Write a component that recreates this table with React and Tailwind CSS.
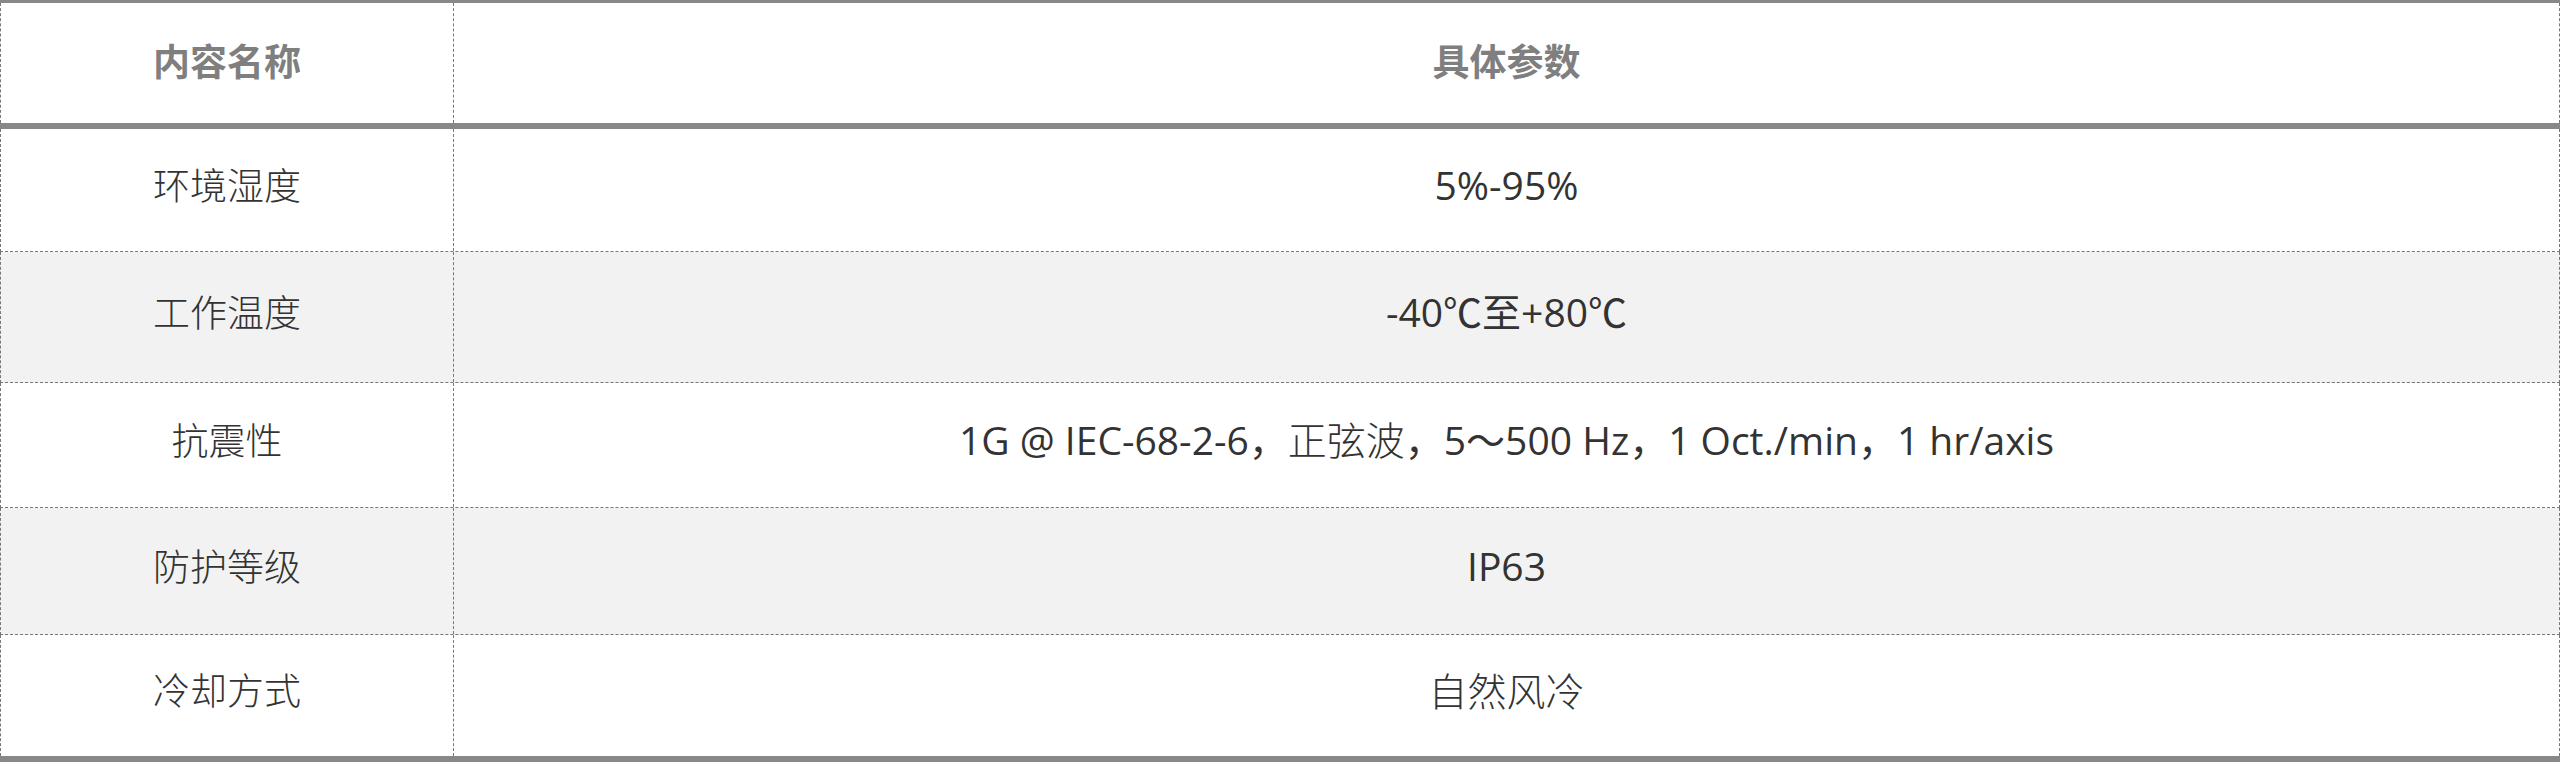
const rows = [
  { name: "环境湿度", value: "5%-95%", h: "h-[123px]" },
  { name: "工作温度", value: "-40℃至+80℃", h: "h-[131px]", alt: true },
  {
    name: "抗震性",
    value: (
      <>
        1G @ IEC-68-2-6，<span className="font-light">正弦波</span>，5～500 Hz，1 Oct./min，1 hr/axis
      </>
    ),
    h: "h-[125px]",
  },
  { name: "防护等级", value: "IP63", h: "h-[127px]", alt: true },
  {
    name: "冷却方式",
    value: <span className="font-light">自然风冷</span>,
    h: "h-[121px]",
    last: true,
  },
];

export default function App() {
  return (
    <div className="w-[2560px] h-[780px] bg-white font-['Open_Sans','Noto_Sans_CJK_SC',sans-serif]">
      {/* top rule */}
      <div className="h-[3px] bg-[#888]" />

      {/* header */}
      <div className="flex h-[120px] border-x border-dashed border-[#777] text-[37px] font-bold text-[#7f7f7f]">
        <div className="w-[453px] flex items-center justify-center pb-[3px] border-r border-dashed border-[#777]">
          内容名称
        </div>
        <div className="flex-1 flex items-center justify-center pb-[3px]">具体参数</div>
      </div>
      <div className="h-[6px] bg-[#888]" />

      {/* body */}
      {rows.map((r) => (
        <div
          key={r.name}
          className={`flex ${r.h} border-x border-dashed border-[#777] text-[#333] ${
            r.alt ? "bg-[#f2f2f2]" : "bg-white"
          } ${r.last ? "" : "border-b"}`}
        >
          <div className="w-[453px] flex items-center justify-center pb-[9px] border-r border-dashed border-[#777] text-[37px] font-light">
            {r.name}
          </div>
          <div className="flex-1 flex items-center justify-center pb-[9px] text-[39px]">
            {r.value}
          </div>
        </div>
      ))}
      <div className="h-[6px] bg-[#888]" />
    </div>
  );
}
